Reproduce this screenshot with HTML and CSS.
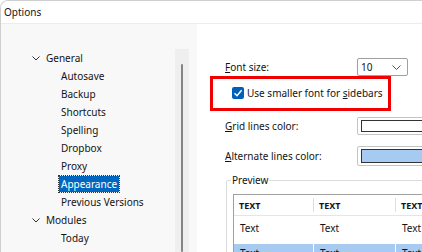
FILE: index.html
```html
<!DOCTYPE html>
<html lang="en">
<head>
    <meta charset="UTF-8">
    <title>Options</title>
    <link rel="stylesheet" href="styles.css">
</head>
<body>
    <div class="window">
        <div class="titlebar">Options</div>
        <div class="content">
            <div class="sidebar">
                <ul class="tree">
                    <li class="node"><span class="chev"><svg width="8" height="5" viewBox="0 0 8 5"><polyline points="0.5,0.5 4,4 7.5,0.5" fill="none" stroke="#333" stroke-width="1"/></svg></span>General</li>
                    <li class="leaf"><span>Autosave</span></li>
                    <li class="leaf"><span>Backup</span></li>
                    <li class="leaf"><span>Shortcuts</span></li>
                    <li class="leaf"><span>Spelling</span></li>
                    <li class="leaf"><span>Dropbox</span></li>
                    <li class="leaf"><span>Proxy</span></li>
                    <li class="leaf"><span class="selected">Appearance</span></li>
                    <li class="leaf"><span>Previous Versions</span></li>
                    <li class="node"><span class="chev"><svg width="8" height="5" viewBox="0 0 8 5"><polyline points="0.5,0.5 4,4 7.5,0.5" fill="none" stroke="#333" stroke-width="1"/></svg></span>Modules</li>
                    <li class="leaf"><span>Today</span></li>
                </ul>
                <div class="scrollbar"><div class="thumb"></div></div>
            </div>
            <div class="panel">
                <div class="row font-row">
                    <span class="label"><u>F</u>ont size:</span>
                    <div class="combo">
                        <span>10</span>
                        <svg width="9" height="5" viewBox="0 0 9 5"><polyline points="0.5,0.5 4.5,4.5 8.5,0.5" fill="none" stroke="#555" stroke-width="1"/></svg>
                    </div>
                </div>
                <div class="row check-row">
                    <span class="checkbox"><svg width="12" height="12" viewBox="0 0 12 12"><polyline points="2.5,6.2 5,8.7 9.6,3.3" fill="none" stroke="#fff" stroke-width="1.5"/></svg></span>
                    <span>Use smaller font for <u>s</u>idebars</span>
                </div>
                <div class="row color-row">
                    <span class="label"><u>G</u>rid lines color:</span>
                    <div class="swatch"><div class="swatch-fill white"></div></div>
                </div>
                <div class="row color-row alt">
                    <span class="label"><u>A</u>lternate lines color:</span>
                    <div class="swatch"><div class="swatch-fill blue"></div></div>
                </div>
                <fieldset class="group">
                    <legend>Preview</legend>
                    <div class="grid">
                        <div class="grid-head">
                            <div class="col c1"><span>TEXT</span></div>
                            <div class="col c2"><span>TEXT</span></div>
                            <div class="col c3"><span>TEXT</span></div>
                        </div>
                        <div class="grid-row first">
                            <div class="cell c1">Text</div>
                            <div class="cell c2">Text</div>
                            <div class="cell c3">Text</div>
                        </div>
                        <div class="grid-row striped">
                            <div class="cell c1">Text</div>
                            <div class="cell c2">Text</div>
                            <div class="cell c3">Text</div>
                        </div>
                    </div>
                </fieldset>
                <div class="annotation"></div>
            </div>
        </div>
    </div>
</body>
</html>
```

FILE: styles.css
```css
html, body {
    margin: 0;
    padding: 0;
    background: #fff;
}
body {
    font-family: 'Segoe UI', 'Noto Sans', sans-serif;
    font-size: 10px;
    color: #141414;
}
.window {
    width: 422px;
    height: 252px;
    box-sizing: border-box;
    border-top: 1px solid #cfcfcf;
    border-left: 1px solid #cfcfcf;
    border-top-left-radius: 8px;
    overflow: hidden;
    display: flex;
    flex-direction: column;
}
.titlebar {
    height: 22px;
    line-height: 22px;
    padding-left: 3px;
    background: #fff;
    border-bottom: 1px solid #ececec;
    flex: none;
}
.content {
    flex: 1;
    display: flex;
    min-height: 0;
}
.sidebar {
    width: 196px;
    flex: none;
    background: #f8f8f8;
    display: flex;
}
.tree {
    list-style: none;
    margin: 0;
    padding: 25px 0 0 0;
    flex: 1;
}
.tree li {
    height: 18px;
    line-height: 18px;
    white-space: nowrap;
}
.node {
    padding-left: 29px;
    display: flex;
    align-items: center;
}
.chev {
    width: 16px;
    display: flex;
    align-items: center;
    padding-left: 2px;
    box-sizing: border-box;
}
.leaf {
    padding-left: 58px;
}
.leaf span {
    padding: 0 2px;
    display: inline-block;
    line-height: 16px;
}
.leaf .selected {
    background: #0067c0;
    color: #fff;
    outline: 1px dotted #333;
}
.scrollbar {
    width: 14px;
    margin: 25px 8px 0 0;
    background: #efefef;
    display: flex;
    justify-content: center;
    padding-top: 15px;
}
.thumb {
    width: 2px;
    background: #858585;
    border-radius: 1px;
}
.panel {
    flex: 1;
    position: relative;
    padding: 34px 0 0 28px;
    background: #fff;
}
.row {
    display: flex;
    align-items: center;
    white-space: nowrap;
}
.label {
    width: 132px;
    flex: none;
}
.font-row {
    height: 18px;
}
.combo {
    width: 51px;
    height: 18px;
    box-sizing: border-box;
    border: 1px solid #a0a0a0;
    border-radius: 2px;
    display: flex;
    align-items: center;
    justify-content: space-between;
    padding: 0 6px 0 3px;
}
.check-row {
    height: 18px;
    margin-top: 8px;
    padding-left: 7px;
    gap: 3px;
}
.checkbox {
    width: 12px;
    height: 12px;
    background: #005fb8;
    border-radius: 2px;
    display: flex;
}
.color-row {
    height: 18px;
    margin-top: 15px;
}
.color-row.alt {
    height: 20px;
    margin-top: 11px;
}
.swatch {
    width: 120px;
    height: 100%;
    box-sizing: border-box;
    border: 1px solid #c4c4c4;
    border-radius: 2px;
    padding: 2px 3px;
}
.swatch-fill {
    height: 100%;
    box-sizing: border-box;
    border: 1px solid #333;
}
.swatch-fill.white {
    background: #fff;
}
.swatch-fill.blue {
    background: #a6caf0;
}
.group {
    margin: 7px 0 0 1px;
    padding: 7px 0 20px 6px;
    width: 260px;
    border: 1px solid #dcdcdc;
    border-radius: 2px;
}
.group legend {
    padding: 0 1px;
    margin-left: -2px;
    line-height: 14px;
}
.grid {
    border: 1px solid #a0a0a0;
    border-right: none;
}
.grid-head {
    display: flex;
    padding: 3px 0;
    border-bottom: 1px solid #e5e5e5;
}
.col {
    height: 14px;
    display: flex;
    align-items: center;
    padding-left: 5px;
    box-sizing: border-box;
    border-right: 1px solid #dedede;
    font-size: 9px;
    font-weight: bold;
}
.c1 {
    width: 80px;
    flex: none;
}
.c2 {
    width: 82px;
    flex: none;
}
.c3 {
    width: 60px;
    flex: none;
}
.grid-row {
    display: flex;
}
.cell {
    box-sizing: border-box;
    border-right: 1px solid #fff;
    padding-left: 6px;
    line-height: 18px;
}
.grid-row.first .cell {
    padding-top: 3px;
    height: 28px;
}
.grid-row.striped {
    background: #a6caf0;
}
.grid-row.striped .cell {
    height: 20px;
}
.annotation {
    position: absolute;
    left: 13px;
    top: 52px;
    width: 181px;
    height: 35px;
    box-sizing: border-box;
    border: 3px solid #f00000;
}
```
